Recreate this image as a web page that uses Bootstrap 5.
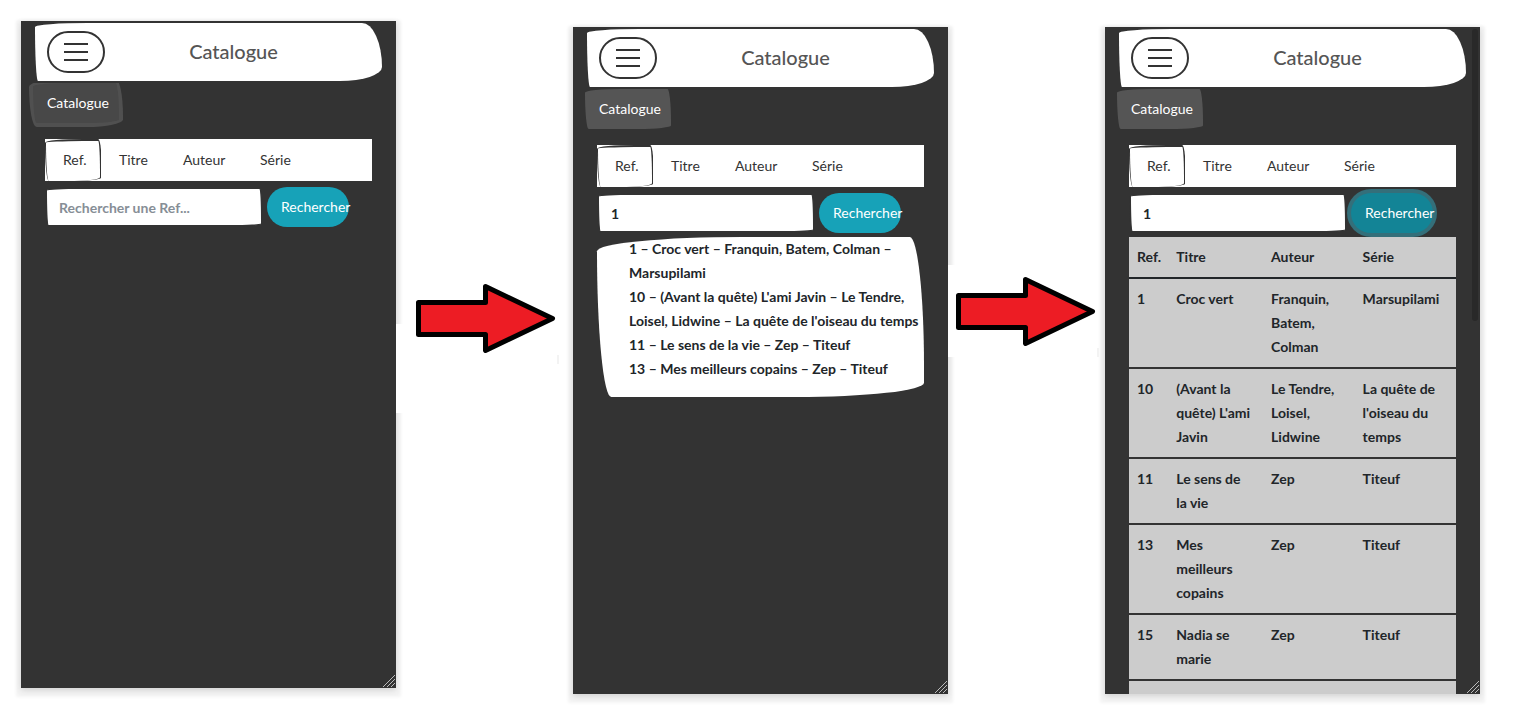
<!DOCTYPE html>
<html lang="fr">
<head>
<meta charset="utf-8">
<meta name="viewport" content="width=device-width, initial-scale=1">
<title>Catalogue</title>
<link rel="stylesheet" href="https://cdn.jsdelivr.net/npm/bootstrap@5.3.0/dist/css/bootstrap.min.css">
<style>
:root { --ink: #333; --sketch: 255px 25px 225px 25px / 25px 225px 25px 255px; }
body { font-family: Lato, "Liberation Sans", sans-serif; font-size: 14px; line-height: 24px; color: #212529; background: #fff; }
.storyboard { display: grid; grid-template-columns: 375fr 177fr 375fr 157fr 375fr; padding: 21px 34px 26px 21px; }
.screen { height: calc(100vh - 53px); background: var(--ink); box-shadow: 0 2px 6px 0 #d0d0d0, 0 4px 3px 5px #f4f4f4; }
.later { margin-top: 6px; }
.topbar { margin: 2px 14px; height: 58px; padding: 0 12px; background: #fff; border-radius: 53px 20px 42px 3px / 4px 44px 14px 54px; }
.burger { width: 58px; height: 42px; border: 2px solid var(--ink); border-radius: 21px; background: #fff; }
.topbar h1 { font-size: 20px; line-height: 24px; color: #555; padding: 0 8px 2px 0; }
.crumb { margin-left: 12px; width: 86px; padding: 8px 14px; font-size: 14px; color: #fff; background: #555; border: 0; border-radius: var(--sketch); }
.crumb.focused { background: #484848; box-shadow: 0 0 0 4px #505050; clip-path: inset(0 -4px -4px -4px); }
.search { margin: 16px 24px 0; }
.tabs { background: #fff; height: 42px; }
.tabs button { background: #fff; border: 0; padding: 0 0 0 18px; text-align: left; color: var(--ink); width: 64px; }
.tabs .chosen { border: solid var(--ink); border-width: 2px 2px 0 1px; border-radius: var(--sketch); width: 57px; padding: 0 0 2px 17px; margin-right: -1px; }
.tabs .wide { width: 77px; }
.query { margin-top: 6px; height: 40px; }
.query input { height: 40px; padding: 0 12px; border: 2px solid var(--ink); border-radius: var(--sketch); font-weight: 700; color: #212529; background: #fff; outline: 0; }
.query input::placeholder { color: #868e96; }
.query button { height: 40px; margin-left: 4px; padding: 0 0 0 14px; border: 0; border-radius: 20px; background: #17a2b8; color: #fff; text-align: left; white-space: nowrap; }
.query .focused { background: #138496; box-shadow: 0 0 0 4px #346f7a; }
.hints { margin: 4px 0 0; padding: 0 0 16px 32px; background: #fff; border-radius: var(--sketch); font-weight: 700; list-style: none; }
.books { width: 100%; margin-top: 4px; table-layout: fixed; background: #ccc; font-weight: 700; }
.books th, .books td { padding: 8px; vertical-align: top; border-bottom: 2px solid var(--ink); }
.books th { border-color: #212529; }
.c-ref { width: 12%; } .c-title { width: 29%; } .c-author { width: 28%; }
.books .c-ref { padding-right: 0; }
.books td:nth-child(2) { padding-right: 12px; }
.thumb { top: 2px; right: 2px; width: 6px; height: 292px; border-radius: 3px; background: #292929; }
.grip { right: 0; bottom: 0; }
.arrow { display: block; width: 100%; overflow: visible; position: relative; }
</style>
</head>
<body>
<main class="storyboard">
  <section class="screen position-relative">
    <div class="overflow-hidden h-100">
      <header class="topbar d-flex align-items-center">
        <button class="burger d-flex align-items-center justify-content-center p-0" aria-label="Menu"><svg width="24" height="18" stroke="#333" stroke-width="2"><path d="M0 1h24M0 9h24M0 17h24"/></svg></button>
        <h1 class="flex-fill text-center mb-0">Catalogue</h1>
      </header>
      <button class="crumb focused">Catalogue</button>
      <div class="search">
        <div class="tabs d-flex"><button class="chosen">Ref.</button><button>Titre</button><button class="wide">Auteur</button><button>Série</button></div>
        <form class="query d-flex"><input class="col-8" type="text" aria-label="Ref." placeholder="Rechercher une Ref..."><button class="col-3" type="button">Rechercher</button></form>
      </div>
    </div>
    <svg class="grip position-absolute" width="14" height="14" stroke="#bbb" stroke-width="1"><path d="M1 13L13 1M5 13L13 5M9 13L13 9"/></svg>
  </section>

  <svg class="arrow" viewBox="396 21 177 667" role="img" aria-label="Puis">
    <path fill="#fff" d="M396 324h177v89H396z"/><path fill="#f3f3f3" d="M557 355h2v9h-2z"/>
    <path fill="#ed1c24" stroke="#000" stroke-width="5" stroke-linejoin="round" d="M418.500 302.500H485.500V286.500L552.500 318.500L485.500 350.500V334.500H418.500z"/>
  </svg>

  <section class="screen later position-relative">
    <div class="overflow-hidden h-100">
      <header class="topbar d-flex align-items-center">
        <button class="burger d-flex align-items-center justify-content-center p-0" aria-label="Menu"><svg width="24" height="18" stroke="#333" stroke-width="2"><path d="M0 1h24M0 9h24M0 17h24"/></svg></button>
        <h1 class="flex-fill text-center mb-0">Catalogue</h1>
      </header>
      <button class="crumb">Catalogue</button>
      <div class="search">
        <div class="tabs d-flex"><button class="chosen">Ref.</button><button>Titre</button><button class="wide">Auteur</button><button>Série</button></div>
        <form class="query d-flex"><input class="col-8" type="text" aria-label="Ref." value="1" autofocus><button class="col-3" type="button">Rechercher</button></form>
        <ul class="hints">
          <li>1 – Croc vert – Franquin, Batem, Colman – Marsupilami</li>
          <li>10 – (Avant la quête) L'ami Javin – Le Tendre, Loisel, Lidwine – La quête de l'oiseau du temps</li>
          <li>11 – Le sens de la vie – Zep – Titeuf</li>
          <li>13 – Mes meilleurs copains – Zep – Titeuf</li>
        </ul>
      </div>
    </div>
    <svg class="grip position-absolute" width="14" height="14" stroke="#bbb" stroke-width="1"><path d="M1 13L13 1M5 13L13 5M9 13L13 9"/></svg>
  </section>

  <svg class="arrow" viewBox="948 21 157 667" role="img" aria-label="Puis">
    <path fill="#fff" d="M948 265h149v92H948z"/><path fill="#f3f3f3" d="M1097 348h2v9h-2z"/>
    <path fill="#ed1c24" stroke="#000" stroke-width="5" stroke-linejoin="round" d="M958.500 295.500H1025.500V279.500L1092.500 311.500L1025.500 343.500V327.500H958.500z"/>
  </svg>

  <section class="screen later position-relative">
    <div class="overflow-hidden h-100">
      <header class="topbar d-flex align-items-center">
        <button class="burger d-flex align-items-center justify-content-center p-0" aria-label="Menu"><svg width="24" height="18" stroke="#333" stroke-width="2"><path d="M0 1h24M0 9h24M0 17h24"/></svg></button>
        <h1 class="flex-fill text-center mb-0">Catalogue</h1>
      </header>
      <button class="crumb">Catalogue</button>
      <div class="search">
        <div class="tabs d-flex"><button class="chosen">Ref.</button><button>Titre</button><button class="wide">Auteur</button><button>Série</button></div>
        <form class="query d-flex"><input class="col-8" type="text" aria-label="Ref." value="1"><button class="col-3 focused" type="button">Rechercher</button></form>
        <table class="books">
          <thead><tr><th class="c-ref">Ref.</th><th class="c-title">Titre</th><th class="c-author">Auteur</th><th>Série</th></tr></thead>
          <tbody>
            <tr><td>1</td><td>Croc vert</td><td>Franquin, Batem, Colman</td><td>Marsupilami</td></tr>
            <tr><td>10</td><td>(Avant la quête) L'ami Javin</td><td>Le Tendre, Loisel, Lidwine</td><td>La quête de l'oiseau du temps</td></tr>
            <tr><td>11</td><td>Le sens de la vie</td><td>Zep</td><td>Titeuf</td></tr>
            <tr><td>13</td><td>Mes meilleurs copains</td><td>Zep</td><td>Titeuf</td></tr>
            <tr><td>15</td><td>Nadia se marie</td><td>Zep</td><td>Titeuf</td></tr>
            <tr><td>&nbsp;</td><td></td><td></td><td></td></tr>
          </tbody>
        </table>
      </div>
    </div>
    <div class="thumb position-absolute"></div>
    <svg class="grip position-absolute" width="14" height="14" stroke="#bbb" stroke-width="1"><path d="M1 13L13 1M5 13L13 5M9 13L13 9"/></svg>
  </section>
</main>
<script src="https://cdn.jsdelivr.net/npm/bootstrap@5.3.0/dist/js/bootstrap.bundle.min.js"></script>
</body>
</html>
